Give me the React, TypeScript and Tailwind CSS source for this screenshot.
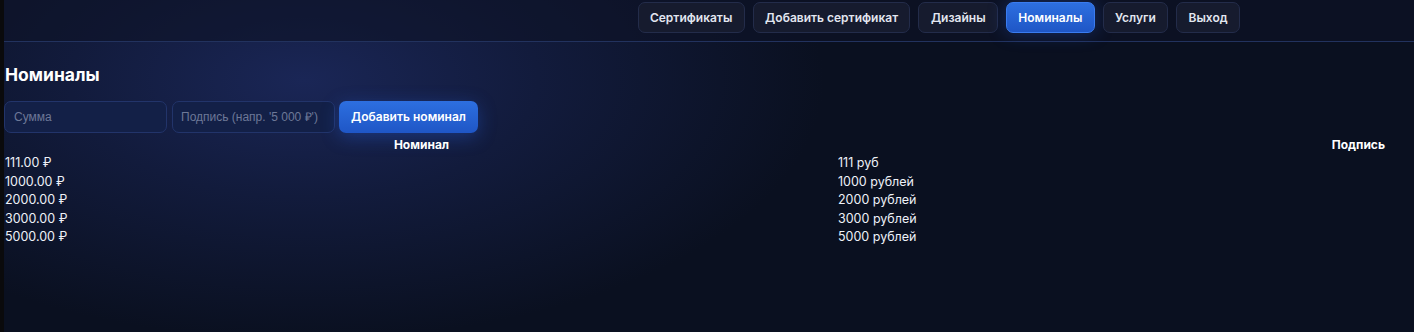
import React from "react";

const NAV = ["Сертификаты", "Добавить сертификат", "Дизайны", "Номиналы", "Услуги", "Выход"];

const ROWS = [
  ["111.00 ₽", "111 руб"],
  ["1000.00 ₽", "1000 рублей"],
  ["2000.00 ₽", "2000 рублей"],
  ["3000.00 ₽", "3000 рублей"],
  ["5000.00 ₽", "5000 рублей"],
];

export default function App() {
  return (
    <div className="flex w-[1414px] h-[332px] overflow-hidden bg-[#0a0a0c]" style={{ fontFamily: "Inter, 'Noto Sans', sans-serif" }}>
      <div className="w-[4px] shrink-0" />
      <div className="flex-1 flex flex-col bg-[#0a1020] bg-[radial-gradient(ellipse_520px_260px_at_300px_80px,#1a2656_0%,#121b3c_45%,#0a1020_100%)]">

        {/* ── Header nav ─────────────────────────── */}
        <header className="h-[42px] border-b border-[#22325e] bg-[#0d1226]/60 flex justify-end pt-[2px] pr-[174px]">
          <nav className="flex gap-[8px] h-[31px]">
            {NAV.map((n) => (
              <button key={n}
                className={n === "Номиналы"
                  ? "px-[11.4px] rounded-[7px] text-[12px] font-semibold text-white bg-gradient-to-b from-[#2d6fe0] to-[#1f56c6] border border-[#3a7cf0] shadow-[0_0_18px_rgba(40,100,230,0.35)]"
                  : "px-[11.4px] rounded-[7px] text-[12px] font-semibold text-[#e2e6f0] bg-[#161b2e] border border-[#232c4a]"}>
                {n}
              </button>
            ))}
          </nav>
        </header>

        {/* ── Content ────────────────────────────── */}
        <main className="pl-[1px]">
          <h1 className="mt-[22px] text-[17.5px] font-bold text-white leading-[22px]">Номиналы</h1>

          <div className="flex gap-[5px] mt-[15px] -ml-[1px]">
            <input placeholder="Сумма"
              className="w-[163px] h-[32px] px-[9px] rounded-[7px] bg-[#132047] border border-[#22346a] text-[12px] text-white placeholder:text-[#6d7897] outline-none"
              style={{ fontFamily: "'Liberation Sans', Arial, sans-serif" }} />
            <input placeholder="Подпись (напр. '5 000 ₽')"
              className="w-[163px] h-[32px] px-[8px] rounded-[7px] bg-[#132047] border border-[#22346a] text-[12px] text-white placeholder:text-[#6d7897] outline-none"
              style={{ fontFamily: "'Liberation Sans', Arial, sans-serif" }} />
            <button className="-ml-[1px] w-[139px] h-[32px] rounded-[7px] text-[12px] font-semibold text-white bg-gradient-to-b from-[#2d6fe0] to-[#1f56c6] shadow-[0_4px_18px_rgba(40,100,230,0.35)]">
              Добавить номинал
            </button>
          </div>

          <table className="w-full mt-[3px] text-[12.5px] text-white border-collapse">
            <thead>
              <tr>
                <th className="w-[833px] text-center text-[12px] font-bold leading-[18px]">Номинал</th>
                <th className="text-right pr-[29px] text-[12px] font-bold leading-[18px]">Подпись</th>
              </tr>
            </thead>
            <tbody>
              {ROWS.map(([a, b]) => (
                <tr key={a}>
                  <td className="leading-[18.5px] text-[#eef1f8]">{a}</td>
                  <td className="leading-[18.5px] text-[#eef1f8]">{b}</td>
                </tr>
              ))}
            </tbody>
          </table>
        </main>
      </div>
    </div>
  );
}
